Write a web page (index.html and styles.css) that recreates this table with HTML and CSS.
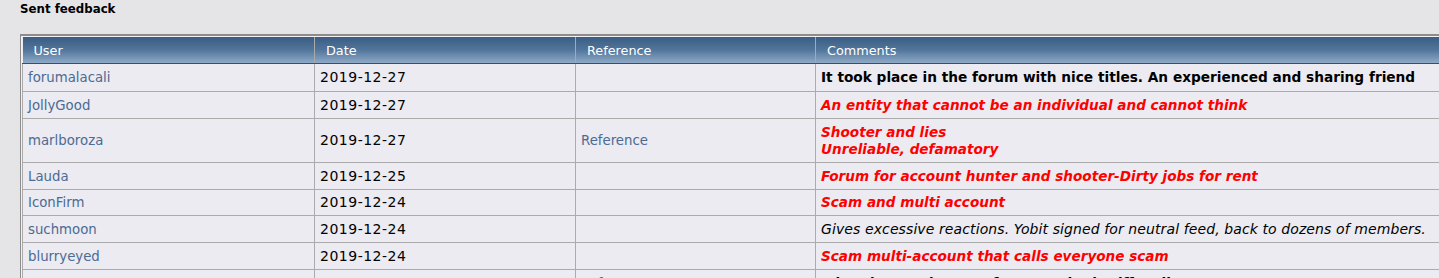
FILE: index.html
```html
<!DOCTYPE html>
<html>
<head>
<meta charset="utf-8">
<link rel="stylesheet" href="styles.css">
</head>
<body>
<div class="page">
  <h2 class="title">Sent feedback</h2>
  <div class="frame">
    <table class="fb">
      <colgroup>
        <col class="c-user"><col class="c-date"><col class="c-ref"><col class="c-com">
      </colgroup>
      <thead>
        <tr><th>User</th><th>Date</th><th>Reference</th><th>Comments</th></tr>
      </thead>
      <tbody>
        <tr class="first"><td><a href="#">forumalacali</a></td><td class="date">2019-12-27</td><td></td><td><span class="pos">It took place in the forum with nice titles. An experienced and sharing friend</span></td></tr>
        <tr><td><a href="#">JollyGood</a></td><td class="date">2019-12-27</td><td></td><td><span class="neg">An entity that cannot be an individual and cannot think</span></td></tr>
        <tr class="tall"><td><a href="#">marlboroza</a></td><td class="date">2019-12-27</td><td><a href="#">Reference</a></td><td><span class="neg">Shooter and lies<br>Unreliable, defamatory</span></td></tr>
        <tr><td><a href="#">Lauda</a></td><td class="date">2019-12-25</td><td></td><td><span class="neg">Forum for account hunter and shooter-Dirty jobs for rent</span></td></tr>
        <tr class="short"><td><a href="#">IconFirm</a></td><td class="date">2019-12-24</td><td></td><td><span class="neg">Scam and multi account</span></td></tr>
        <tr><td><a href="#">suchmoon</a></td><td class="date">2019-12-24</td><td></td><td><span class="neu">Gives excessive reactions. Yobit signed for neutral feed, back to dozens of members.</span></td></tr>
        <tr><td><a href="#">blurryeyed</a></td><td class="date">2019-12-24</td><td></td><td><span class="neg">Scam multi-account that calls everyone scam</span></td></tr>
        <tr><td><a href="#">actmyname</a></td><td class="date">2019-12-23</td><td><a href="#">Reference</a></td><td><span class="pos">Joins "bounty hunter" forum and "sheriff" talk</span></td></tr>
      </tbody>
    </table>
  </div>
</div>
</body>
</html>
```
FILE: styles.css
```css
html, body {
  margin: 0;
  padding: 0;
  background: #e5e5e8;
  overflow: hidden;
}
.page {
  padding: 0 0 0 20px;
  font-family: "DejaVu Sans", Verdana, sans-serif;
  font-size: 13px;
}
.title {
  margin: 0;
  padding-top: 1px;
  height: 33px;
  font-size: 11.8px;
  font-weight: bold;
  line-height: 16px;
  color: #000;
}
.frame {
  width: 1460px;
  border-top: 2px solid #8c8c8c;
  border-left: 1px solid #8c8c8c;
  padding-top: 1px;
  padding-left: 1px;
  background: #f2f2f4;
}
.fb {
  border-collapse: collapse;
  table-layout: fixed;
  width: 1450px;
  background: #ebebf1;
}
.c-user { width: 292px; }
.c-date { width: 261px; }
.c-ref { width: 240px; }
.c-com { width: auto; }
.fb th {
  height: 26px;
  padding: 0 0 0 11px;
  text-align: left;
  font-weight: normal;
  color: #fff;
  font-size: 12.8px;
  background: linear-gradient(to bottom, #3a5c82 0%, #52759b 50%, #8eaac8 100%);
  border-left: 1px solid #a9a9a9;
  border-bottom: 1px solid #34506f;
}
.fb th:first-child { border-left: none; }
.fb td {
  height: 26px;
  padding: 0 5px;
  border: 1px solid #ababab;
  border-top: none;
  color: #000;
  vertical-align: middle;
  white-space: nowrap;
  line-height: 17px;
}
.fb tr.first td { height: 27px; }
.fb tr.short td { height: 25px; }
.fb tr.tall td { height: 43px; }
.fb td:first-child { border-left: 1px solid #ababab; }
.fb a {
  color: #4c6a94;
  text-decoration: none;
  font-size: 13.3px;
}
.fb td.date {
  font-size: 14px;
  letter-spacing: 0.5px;
}
.pos { font-weight: bold; color: #000; font-size: 13.7px; }
.neg { font-weight: bold; font-style: italic; color: #ff0000; font-size: 13.6px; }
.neu { font-style: italic; color: #000; font-size: 14px; letter-spacing: 0.1px; }
```
